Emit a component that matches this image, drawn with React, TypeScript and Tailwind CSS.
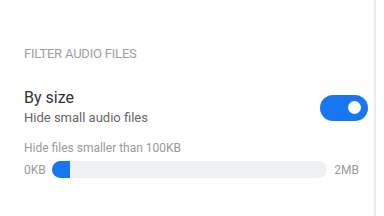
export default function App() {
  return (
    <div className="w-[384px] h-[216px] bg-white overflow-hidden flex font-['Roboto',sans-serif]">
      <div className="w-[376px] h-full flex flex-col pl-6 pr-[6px] border-r-[2px] border-[#ececec]">
        <div className="h-[15px] ml-2 w-[143px] rounded-b-md bg-[#fefefe]" />
        <div className="mt-[31px] text-[13px] leading-[16px] text-[#9e9e9e] tracking-[-0.2px]">
          FILTER AUDIO FILES
        </div>
        <div className="mt-[26px] flex items-center justify-between">
          <div className="flex flex-col">
            <span className="text-[16px] leading-[20px] text-[#333]">By size</span>
            <span className="text-[13px] leading-[18px] text-[#666] mt-[1px]">Hide small audio files</span>
          </div>
          <div className="w-[48px] h-[26px] rounded-full bg-[#1976f2] flex items-center justify-end pr-[7px]">
            <div className="w-[13px] h-[13px] rounded-full bg-white" />
          </div>
        </div>
        <div className="mt-[14px] text-[12px] leading-[14px] text-[#9a9a9a]">
          Hide files smaller than 100KB
        </div>
        <div className="mt-[6px] flex items-center gap-[7px] pr-[9px]">
          <span className="text-[12px] leading-[14px] text-[#9a9a9a] w-[21px]">0KB</span>
          <div className="flex-1 h-[17px] rounded-full bg-[#eef0f3] flex">
            <div className="w-[18px] h-full rounded-l-full bg-[#1976f2]" />
          </div>
          <span className="text-[12px] leading-[14px] text-[#9a9a9a]">2MB</span>
        </div>
      </div>
    </div>
  )
}
